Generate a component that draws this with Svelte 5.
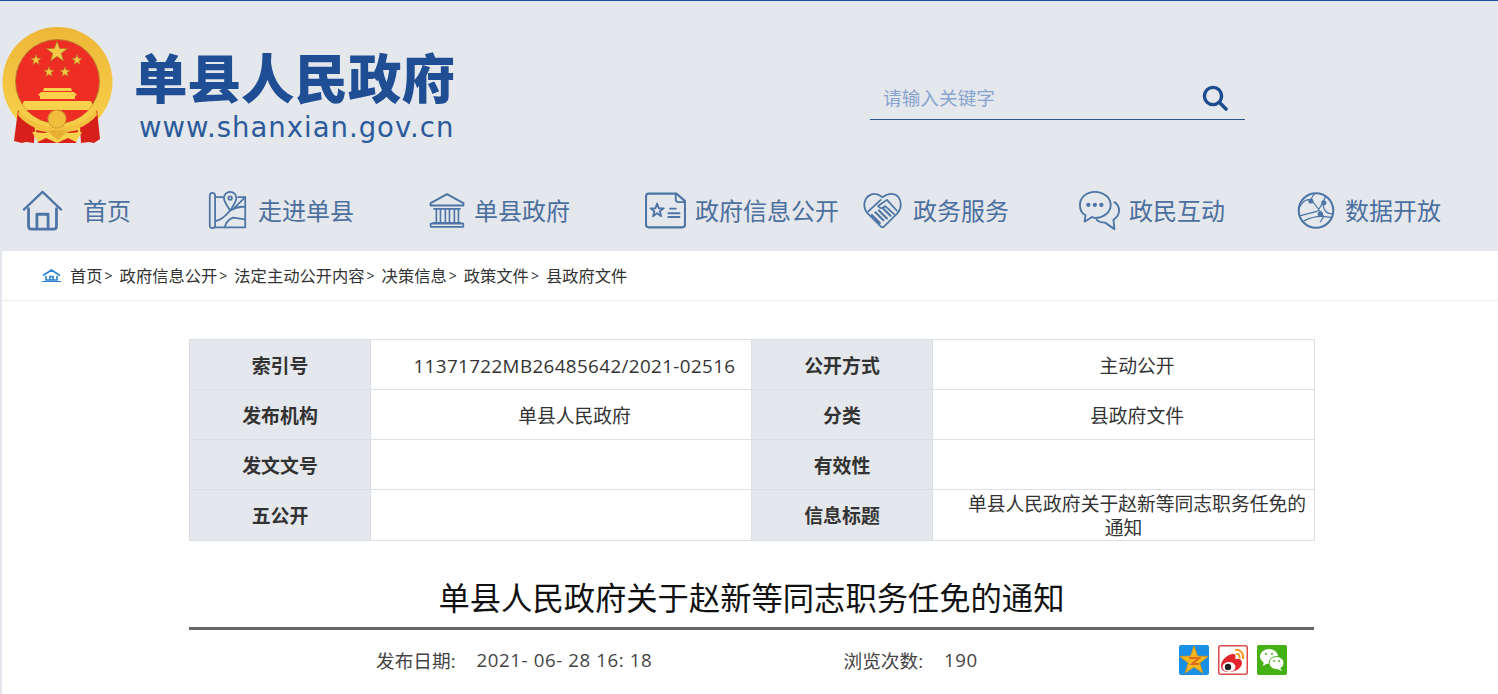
<script>
    // 导航、面包屑、信息表数据
    const navItems = [
        { key: 'home', label: '首页' },
        { key: 'map', label: '走进单县' },
        { key: 'gov', label: '单县政府' },
        { key: 'info', label: '政府信息公开' },
        { key: 'service', label: '政务服务' },
        { key: 'chat', label: '政民互动' },
        { key: 'data', label: '数据开放' }
    ];
    const crumbs = ['首页', '政府信息公开', '法定主动公开内容', '决策信息', '政策文件', '县政府文件'];
    const rows = [
        ['索引号', '11371722MB26485642/2021-02516', '公开方式', '主动公开'],
        ['发布机构', '单县人民政府', '分类', '县政府文件'],
        ['发文文号', '', '有效性', ''],
        ['五公开', '', '信息标题', '单县人民政府关于赵新等同志职务任免的通知']
    ];
    const starsSmall = [[36, 33], [77, 33], [49, 45], [65, 45]];

    function starPoints(cx, cy, r) {
        const pts = [];
        for (let i = 0; i < 10; i++) {
            const rad = i % 2 ? r * 0.4 : r;
            const a = -Math.PI / 2 + (i * Math.PI) / 5;
            pts.push((cx + rad * Math.cos(a)).toFixed(1) + ',' + (cy + rad * Math.sin(a)).toFixed(1));
        }
        return pts.join(' ');
    }
</script>

<div class="page">
    <header class="top">
        <div class="brand-row">
            <svg class="emblem" viewBox="0 0 115 118" aria-hidden="true">
                <defs>
                    <linearGradient id="gold" x1="0" y1="0" x2="0" y2="1">
                        <stop offset="0" stop-color="#eeb637" />
                        <stop offset="1" stop-color="#f8d24c" />
                    </linearGradient>
                    <clipPath id="face"><circle cx="57.5" cy="54.5" r="42" /></clipPath>
                </defs>
                <circle cx="57.5" cy="55" r="55" fill="url(#gold)" />
                <circle cx="57.5" cy="54.500" r="42" fill="#ee2d24" />
                <circle cx="57.5" cy="54.500" r="42" fill="none" stroke="#a8812c" stroke-width=".8" />
                <polygon points={starPoints(57, 25, 11)} fill="#f3c846" stroke="#a9781f" stroke-width=".7" />
                {#each starsSmall as s}
                    <polygon points={starPoints(s[0], s[1], 5.5)} fill="#f3c846" stroke="#a9781f" stroke-width=".5" />
                {/each}
                <!-- 天安门 -->
                <g clip-path="url(#face)" fill="#f8d24c">
                    <path d="M44 61h27l1 3h-29z" />
                    <path d="M41 65h33l3 3-2 1v3H40v-3l-2-1z" />
                    <path d="M24 74h67l4 9H20z" />
                    <rect x="12" y="83" width="90" height="18" fill="#ee2d24" />
                </g>
                <!-- 绶带 -->
                <path d="M18 83c4 7 9 13 17 17l-1 16-8-1-4 1-8-2z" fill="#d8201a" />
                <path d="M97 83c-4 7-9 13-17 17l1 16 8-1 5 1 6-4z" fill="#d8201a" />
                <path d="M36 103l21 4 21-4-2 13H38z" fill="#d8201a" />
                <path d="M19 83c8 11 22 17 38.500 17S88 94 96 83l1 5c-9 11-23 17-39.500 17S27 99 18 88z" fill="#f3c03f" />
                <path d="M32 105l13 1 12-4 12 4 13-1-6 10-8-4-11 5-11-5-8 4z" fill="#f8d24c" />
                <circle cx="57" cy="92" r="9" fill="#f0bd3d" stroke="#c9962b" stroke-width="1.400" stroke-dasharray="2 1.500" />
                <path d="M48 105c3-3 16-3 19 0l-9 8z" fill="#e6ae33" />
            </svg>
            <div class="brand-text">
                <div class="brand-name">单县人民政府</div>
                <div class="brand-url">www.shanxian.gov.cn</div>
            </div>
            <div class="search">
                <span class="placeholder">请输入关键字</span>
                <svg class="search-icon" viewBox="0 0 26 26" aria-hidden="true">
                    <circle cx="11" cy="11" r="8.600" fill="none" stroke="#1d4b8f" stroke-width="3.400" />
                    <path d="M17.500 17.500L24 24" stroke="#1d4b8f" stroke-width="3.600" stroke-linecap="round" />
                </svg>
            </div>
        </div>

        <nav class="nav">
            {#each navItems as item}
                <div class="nav-item">
                    <svg class="nav-icon {item.key}" viewBox="0 0 44 44" fill="none" stroke="#4d75a6" stroke-width="2" stroke-linecap="round" stroke-linejoin="round" aria-hidden="true">
                        {#if item.key === 'home'}
                            <path d="M2 21L22 2l20 19" stroke-width="2.400" />
                            <path d="M7 20v19q0 3 3 3h24q3 0 3-3V20" stroke-width="3" />
                            <path d="M16 41V26h12v15" stroke-width="3" />
                        {:else if item.key === 'map'}
                            <path d="M2 5a3 3 0 0 1 6 0v34a3 3 0 0 1-6 0z" />
                            <path d="M8 7h9M8 41h34V7h-8" />
                            <path d="M25 22c-4-6-7-10-7-14a7 7 0 0 1 14 0c0 4-3 8-7 14z" />
                            <circle cx="25" cy="8" r="2" />
                            <path d="M8 34c7-1 13-7 17-12 5-3 10-5 17-4M42 7L29 20M19 41c1-5 4-9 9-11l14 2" />
                        {:else if item.key === 'gov'}
                            <path d="M22 2L2 13v3h40v-3z" stroke-width="2.400" />
                            <path d="M6 20h32M5 37h34M2 42h40v-4H2z" />
                            <path d="M9 20v17M14 20v17M20 20v17M25 20v17M31 20v17M36 20v17" />
                        {:else if item.key === 'info'}
                            <path d="M4 4h30l9 8v25q0 3-3 3H4q-3 0-3-3V7q0-3 3-3z" stroke-width="2.400" />
                            <path d="M33 4v6q0 3 3 3h7" />
                            <polygon points={starPoints(13, 22, 7.500)} />
                            <path d="M27 20h6M25 25h12M25 29h12" />
                        {:else if item.key === 'service'}
                            <path d="M20 40L5 25C-1 18 1 7 9 4c5-2 9 0 13 3 4-3 9-5 14-3 7 3 9 14 3 21L24 40q-2 2-4 0z" />
                            <path d="M6 23L20 10M38 22L27 10l-10 7c2 3 5 3 8 0l10 9" />
                            <path d="M10 27l9 9M14 24l9 9M18 22l9 9M23 20l8 8" stroke-width="2.400" />
                        {:else if item.key === 'chat'}
                            <path d="M17 2C8 2 1 8 1 16c0 5 2 9 6 11l-1 7 8-5c1 0 2 1 3 1 9 0 17-6 17-14S26 2 17 2z" />
                            <path d="M38 13c3 2 5 6 5 9 0 5-3 8-6 10l1 10-10-7c-3 0-7-1-9-3" />
                            <circle cx="10" cy="16" r="1.300" fill="#4d75a6" /><circle cx="17" cy="16" r="1.300" fill="#4d75a6" /><circle cx="24" cy="16" r="1.300" fill="#4d75a6" />
                        {:else}
                            <circle cx="22" cy="22" r="20" stroke-width="2.400" />
                            <path d="M3 18C7 11 11 8 16 10c5 4 10 12 15 19l-4 6M33 6c-3 6-5 12-10 17l-19 5M30 12c0 8 3 14 11 14M8 34c8-4 16-6 24-5l8 1M16 10c1-3 2-5 4-7" stroke-width="1.400" />
                            <circle cx="16" cy="11" r="2" fill="#4d75a6" /><circle cx="31" cy="13" r="2" fill="#4d75a6" /><circle cx="27" cy="26" r="2" fill="#4d75a6" />
                        {/if}
                    </svg>
                    <span class="nav-label">{item.label}</span>
                </div>
            {/each}
        </nav>
    </header>

    <main class="content">
        <div class="crumbs">
            <svg class="crumb-home" viewBox="0 0 19 13" aria-hidden="true">
                <path d="M1 6.500L9.500 1 18 6.500M4 7v4h11V7M8 11V7.500h3V11" fill="none" stroke="#2b82d4" stroke-width="1.600" />
                <path d="M0 12.500h19" stroke="#2b82d4" stroke-width="1" />
            </svg>
            {#each crumbs as c, i}
                <span class="crumb">{c}</span>{#if i < crumbs.length - 1}<span class="sep">&gt;</span>{/if}
            {/each}
        </div>

        <div class="article">
            <table class="meta-table">
                <colgroup>
                    <col class="c-label" /><col class="c-left" /><col class="c-label" /><col class="c-right" />
                </colgroup>
                <tbody>
                    {#each rows as r}
                        <tr>
                            <th>{r[0]}</th>
                            <td class:num={/^\d/.test(r[1])}>{r[1]}</td>
                            <th>{r[2]}</th>
                            <td>{r[3]}</td>
                        </tr>
                    {/each}
                </tbody>
            </table>

            <h1>单县人民政府关于赵新等同志职务任免的通知</h1>

            <div class="info-bar">
                <span>发布日期:</span>
                <span class="date">2021- 06- 28 16: 18</span>
                <span>浏览次数:</span>
                <span class="views">190</span>
                <div class="share">
                    <svg viewBox="0 0 30 30" aria-hidden="true">
                        <rect width="30" height="30" rx="2" fill="#1a8fe6" />
                        <polygon points={starPoints(15, 16, 15)} fill="#f8b71c" stroke="#d99412" stroke-width=".8" />
                        <path d="M10 13h10l-7 6h7" fill="none" stroke="#e0691a" stroke-width="2" />
                    </svg>
                    <svg viewBox="0 0 30 30" aria-hidden="true">
                        <rect x=".75" y=".75" width="28.500" height="28.500" rx="2" fill="#fff" stroke="#e0484c" stroke-width="1.500" />
                        <path d="M3 21c0-6 7-12 12-12 3 0 3 2 2 5 4-1 7 0 7 4 0 5-7 9-13 9-5 0-8-2-8-6z" fill="#e3262e" />
                        <ellipse cx="11" cy="22" rx="6.500" ry="5" fill="#fff" />
                        <circle cx="10" cy="22" r="3.200" fill="#222" />
                        <path d="M17 5c5-1 9 3 8 9M18 9c3-.5 4 1.500 3.500 4.500" fill="none" stroke="#f59a23" stroke-width="2" />
                    </svg>
                    <svg viewBox="0 0 30 30" aria-hidden="true">
                        <rect width="30" height="30" rx="2" fill="#46b017" />
                        <ellipse cx="12" cy="11.500" rx="9" ry="7.500" fill="#fff" />
                        <path d="M7 16l-1 5 5-3z" fill="#fff" />
                        <ellipse cx="19.500" cy="18" rx="7.500" ry="6.500" fill="#fff" stroke="#46b017" stroke-width="1" />
                        <path d="M23 23l2 3-5-2z" fill="#fff" />
                        <circle cx="9" cy="9" r="1" fill="#46b017" /><circle cx="15" cy="9" r="1" fill="#46b017" />
                        <circle cx="17" cy="16" r=".9" fill="#46b017" /><circle cx="22" cy="16" r=".9" fill="#46b017" />
                    </svg>
                </div>
            </div>
        </div>
    </main>
</div>

<style>
:global(body) { margin: 0; background: #e4e7ec; }
.page {
    font-family: "Open Sans", "Noto Sans CJK SC", sans-serif;
    color: #333;
    height: 694px;
    overflow: hidden;
}
.top {
    height: 250px;
    background: #e4e7ec;
    border-top: 1px solid #1d5299;
}
.brand-row {
    display: flex;
    height: 176px;
}
.emblem { width: 115px; height: 118px; margin-top: 26px; flex: none; }
.brand-text { margin-left: 19px; margin-top: 44px; width: 736px; flex: none; }
.brand-name {
    font-family: "Noto Sans CJK SC", sans-serif;
    font-size: 53.500px;
    font-weight: 900;
    line-height: 62px;
    color: #1f4e94;
}
.brand-url {
    font-family: "DejaVu Sans", sans-serif;
    font-size: 27.500px;
    line-height: 36px;
    margin-left: 5px;
    margin-top: 2px;
    letter-spacing: 1px;
    color: #2c5b9c;
}
.search {
    width: 375px;
    height: 39px;
    margin-top: 79px;
    border-bottom: 1px solid #2a5590;
    display: flex;
    align-items: center;
    justify-content: space-between;
}
.placeholder {
    margin-left: 13px;
    margin-bottom: 6px;
    font-size: 18.670px;
    color: #88a5d0;
}
.search-icon { width: 26px; height: 26px; margin-right: 17px; margin-bottom: 4px; }
.nav { display: flex; padding-left: 22px; height: 66px; align-items: center; }
.nav-item {
    display: flex;
    align-items: center;
    flex: none;
    font-family: "Noto Sans CJK SC", sans-serif;
    font-size: 24px;
    color: #4b6f9f;
    width: 216px;
}
.nav-item:nth-child(1) { width: 186px; }
.nav-item:nth-child(2) { width: 221px; }
.nav-item:nth-child(4) { width: 218px; }
.nav-item:nth-child(6) { width: 218px; }
.nav-label { margin-bottom: 2px; }
.nav-icon { width: 41px; height: 41px; margin-right: 10px; flex: none; }
.nav-icon.home { margin-right: 20px; }
.nav-icon.gov { width: 36px; margin-right: 9px; }
.nav-icon.info { margin-right: 9px; }
.nav-icon.service { width: 39px; margin-right: 11px; }
.nav-icon.map { width: 39px; margin-right: 11px; }
.nav-icon.chat { margin-right: 9px; }
.nav-icon.data { width: 38px; }
.content { background: #fff; margin-left: 2px; height: 443px; }
.crumbs {
    height: 48px;
    padding-bottom: 1px;
    border-bottom: 1px solid #eeeeee;
    display: flex;
    align-items: center;
    padding-left: 40px;
    font-size: 16.300px;
    color: #333;
}
.crumb-home { width: 19px; height: 13px; margin-right: 9px; }
.sep { margin: 0 7px 0 2px; font-size: 14px; }
.article { width: 1125px; margin: 38px 0 0 187px; }
.meta-table {
    width: 1125px;
    table-layout: fixed;
    border-collapse: collapse;
}
.c-label { width: 181px; }
.c-left { width: 381px; }
.c-right { width: 382px; }
.meta-table th, .meta-table td {
    border: 1px solid #dcdfe3;
    height: 50px;
    padding: 2px 0 0;
    box-sizing: border-box;
    line-height: 24px;
    text-align: center;
}
.meta-table th { background: #e4e7ec; font-size: 18.900px; font-weight: 700; color: #333; }
.meta-table td { font-size: 18.800px; text-indent: 27px; color: #333; }
.meta-table td.num { letter-spacing: .4px; }
h1 {
    margin: 0;
    padding-top: 33px;
    height: 53px;
    line-height: 48px;
    text-align: center;
    font-size: 31.300px;
    font-weight: 400;
    color: #111;
    border-bottom: 3px solid #666;
}
.info-bar {
    display: flex;
    align-items: center;
    height: 58px;
    padding: 0 27px 2px 187px;
    font-size: 18.670px;
    color: #444;
}
.date { margin-left: 21px; width: 367px; letter-spacing: .6px; flex: none; }
.views { margin-left: 21px; letter-spacing: .6px; }
.share { display: flex; gap: 9px; margin-left: auto; margin-top: 2px; }
.share svg { width: 30px; height: 30px; }
</style>
